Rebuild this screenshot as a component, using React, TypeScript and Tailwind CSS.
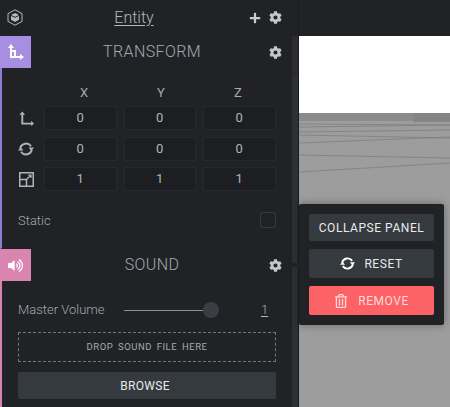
import { FaCog, FaPlus, FaRegTrashAlt, FaVolumeUp } from "react-icons/fa";

const roboto = { fontFamily: "Roboto, sans-serif" };

function AxisIcon({ size = 16, className = "" }: { size?: number; className?: string }) {
  return (
    <svg width={size} height={size} viewBox="0 0 16 16" className={className} fill="none">
      <path d="M3.5 0.5 L6.5 4 H4.5 V12.5 H13 V10.5 L16 13.5 L13 16 V14.5 H2.5 V4 H0.5 Z" fill="currentColor" />
    </svg>
  );
}

function TransformIcon() {
  return (
    <svg width="17" height="17" viewBox="0 0 17 17" fill="none">
      <path d="M4 0 L7 4 H5 V6 H9 V12 H13 V10 L17 13 L13 16 V14 H3 V4 H1 Z M5 8 V12 H7 V8 Z" fill="currentColor" fillRule="evenodd" />
    </svg>
  );
}

function RefreshIcon({ size = 16 }: { size?: number }) {
  return (
    <svg width={size} height={size} viewBox="0 0 16 16" fill="none" stroke="currentColor" strokeWidth="2">
      <path d="M2.2 7.2 A6 6 0 0 1 13 5.2" />
      <path d="M13.8 8.8 A6 6 0 0 1 3 10.8" />
      <path d="M10.6 6.6 H16 L13.3 10 Z M0 9.4 H5.4 L2.7 6 Z" fill="currentColor" stroke="none" />
    </svg>
  );
}

function ScaleIcon() {
  return (
    <svg width="15" height="15" viewBox="0 0 15 15" fill="none" stroke="currentColor" strokeWidth="1.5">
      <rect x="0.75" y="0.75" width="13.5" height="13.5" />
      <path d="M0.75 7.5 H7.5 V14.25" />
      <path d="M7.5 7.5 L12 3 M9 3 H12 V6" strokeWidth="1.2" />
    </svg>
  );
}

function EntityIcon() {
  return (
    <svg width="16" height="17" viewBox="0 0 16 17" fill="none" stroke="#b4bac0" strokeWidth="1">
      <path d="M8 0.8 L15 4.6 V12.4 L8 16.2 L1 12.4 V4.6 Z" />
      <path d="M8 4 L12 6 V10.8 L8 13 L4 10.8 V6 Z" fill="#b4bac0" stroke="none" />
      <path d="M4 6.4 L8 8.4 L12 6.4" stroke="#202226" />
    </svg>
  );
}

function NumberCell({ value }: { value: string }) {
  return (
    <div className="flex h-[24px] w-[72.5px] items-center justify-center border border-[#26282c] bg-[#1c1e21] text-[13px] text-[#b0b5ba]">
      {value}
    </div>
  );
}

function PanelHeader({ title, color, icon }: { title: string; color: string; icon: React.ReactNode }) {
  return (
    <div className="relative flex h-[32px] items-center justify-center pl-[10px]">
      <div className={`absolute left-[-2px] top-0 flex h-[32px] w-[31px] items-center justify-center text-white ${color}`}>{icon}</div>
      <span className="text-[16px] font-light tracking-[0.4px] text-[#a4a9ae]">{title}</span>
      <FaCog className="absolute right-[10px] top-[10px] text-[13px] text-[#c2c7cc]" />
    </div>
  );
}

export default function App() {
  const rows = [
    { icon: <AxisIcon size={15} />, values: ["0", "0", "0"] },
    { icon: <RefreshIcon />, values: ["0", "0", "0"] },
    { icon: <ScaleIcon />, values: ["1", "1", "1"] },
  ];

  return (
    <div className="relative flex h-[407px] w-[450px] overflow-hidden bg-[#202226]" style={roboto}>
      {/* left panel */}
      <div className="flex w-[299px] shrink-0 flex-col border-r border-[#1b1c1f]">
        <div className="relative flex h-[36px] shrink-0 items-center justify-center">
          <span className="absolute left-[7px] top-[9px]"><EntityIcon /></span>
          <span className="pr-[30px] text-[16px] font-light text-[#b4b8bc] underline underline-offset-2">Entity</span>
          <FaPlus className="absolute left-[249px] top-[12px] text-[12px] text-[#c8cdd2]" />
          <FaCog className="absolute left-[269px] top-[11px] text-[13px] text-[#c2c7cc]" />
        </div>

        <div className="flex flex-1">
          <div className="w-[292px]">
            {/* transform */}
            <div className="h-[212px] border-l-2 border-[#8f7bd0]">
              <PanelHeader title="TRANSFORM" color="bg-[#a68ee2]" icon={<TransformIcon />} />
              <div className="mt-[17px] flex pl-[42px] text-[13px] text-[#a4a9ae]">
                <span className="w-[80px] pl-[36px] leading-[15px]">X</span>
                <span className="w-[78px] pl-[33px] leading-[15px]">Y</span>
                <span className="pl-[32px] leading-[15px]">Z</span>
              </div>
              <div className="mt-[6px] flex flex-col gap-[6.5px]">
                {rows.map((row, i) => (
                  <div key={i} className="flex items-center">
                    <div className="flex w-[42px] justify-center pl-[6px] text-[#aeb4ba]">{row.icon}</div>
                    <div className="flex gap-[7px]">
                      {row.values.map((v, j) => (
                        <NumberCell key={j} value={v} />
                      ))}
                    </div>
                  </div>
                ))}
              </div>
              <div className="mt-[19px] flex items-center justify-between pl-[16px] pr-[16px]">
                <span className="pt-[1px] text-[13px] font-light text-[#a4a9ae]">Static</span>
                <div className="h-[16px] w-[16px] rounded-[2px] border border-[#35383c]" />
              </div>
            </div>

            {/* sound */}
            <div className="h-[159px] border-l-2 border-[#d883ad] border-t border-t-[#1d1f22]">
              <PanelHeader title="SOUND" color="bg-[#d984b1]" icon={<FaVolumeUp className="text-[15px]" />} />
              <div className="mt-[21px] flex h-[16px] items-center pl-[16px]">
                <span className="w-[106px] text-[13px] font-light text-[#a4a9ae]">Master Volume</span>
                <div className="flex w-[95px] items-center">
                  <div className="h-[1px] w-[80px] bg-[#8d9196]" />
                  <div className="ml-[-1px] h-[16px] w-[16px] rounded-full bg-[#3a3e42]" />
                </div>
                <span className="ml-[42px] text-[13px] font-light text-[#b0b5ba] underline underline-offset-2">1</span>
              </div>
              <div className="ml-[16px] mt-[14px] flex h-[30px] w-[258px] items-center justify-center border border-dashed border-[#72767a] text-[9.5px] tracking-[0.5px] [word-spacing:2px] text-[#a4a9ae]">
                DROP SOUND FILE HERE
              </div>
              <div className="ml-[16px] mt-[10px] flex h-[27px] w-[258px] items-center justify-center rounded-[2px] bg-[#353a3e] pr-[4px] text-[12px] tracking-[0.3px] text-[#e8eaec]">
                BROWSE
              </div>
            </div>
          </div>

          {/* scrollbar */}
          <div className="flex w-[6px] flex-col bg-[#2a2c30]">
            <div className="h-[40px]" />
            <div className="flex-1 bg-[#2d3034]" />
          </div>
        </div>
      </div>

      {/* viewport */}
      <div className="flex flex-1 flex-col">
        <div className="h-[36px] bg-[#202226]" />
        <div className="h-[77px] bg-white" />
        <svg className="flex-1" width="151" height="294" viewBox="0 0 151 294">
          <rect width="151" height="294" fill="#9d9d9d" />
          <rect width="151" height="8" fill="#8b8b8b" />
          <rect x="114" width="37" height="9" fill="#858585" />
          <path d="M0 11 L151 12 M0 14 L151 12 M0 19 L151 17 M0 22 L151 25 M0 30 L151 24 M0 42 L151 45 M0 59 L151 50" stroke="#7f7f7f" strokeWidth="0.8" fill="none" />
        </svg>
      </div>

      {/* popup */}
      <div className="absolute left-[299px] top-[204px] flex h-[121px] w-[145px] flex-col gap-[8px] rounded-[2px] bg-[#202226] px-[10px] py-[10px] shadow-[0_0_8px_rgba(0,0,0,0.35)]">
        <div className="flex h-[27px] items-center justify-center rounded-[2px] bg-[#353a3e] text-[12px] tracking-[0.55px] text-[#e8eaec]">
          COLLAPSE PANEL
        </div>
        <div className="flex h-[29px] items-center justify-center gap-[9px] rounded-[2px] bg-[#353a3e] text-[12px] tracking-[0.55px] text-[#e8eaec]">
          <span className="text-white"><RefreshIcon size={15} /></span>
          RESET
        </div>
        <div className="flex h-[29px] items-center justify-center gap-[10px] rounded-[2px] bg-[#fd6266] text-[12px] tracking-[0.55px] text-[#ffd9da]">
          <FaRegTrashAlt className="text-[14px]" />
          REMOVE
        </div>
      </div>
      <div className="absolute left-[292px] top-[263px] h-[4px] w-[7px] bg-[#202226]" />
    </div>
  );
}
